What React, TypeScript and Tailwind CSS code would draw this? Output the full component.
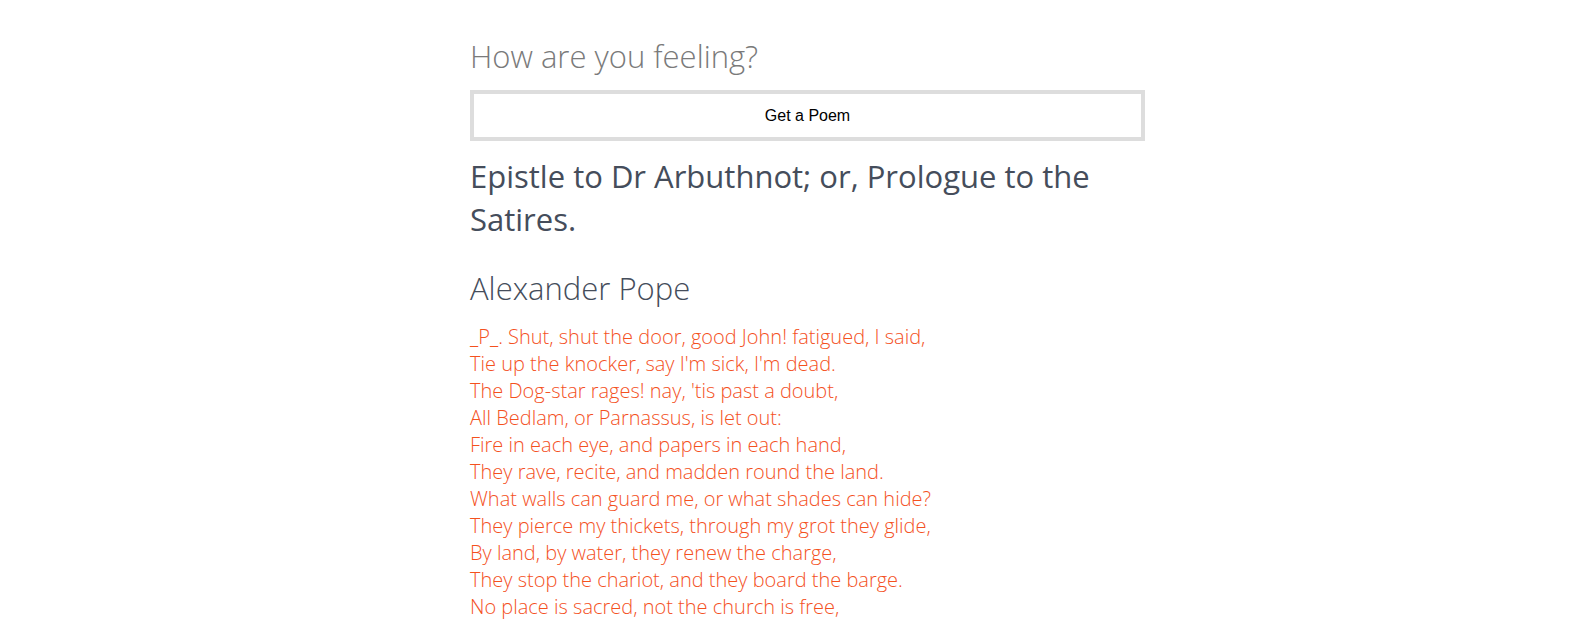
import React from 'react';

const lines = [
  "_P_. Shut, shut the door, good John! fatigued, I said,",
  "Tie up the knocker, say I'm sick, I'm dead.",
  "The Dog-star rages! nay, 'tis past a doubt,",
  'All Bedlam, or Parnassus, is let out:',
  'Fire in each eye, and papers in each hand,',
  'They rave, recite, and madden round the land.',
  'What walls can guard me, or what shades can hide?',
  'They pierce my thickets, through my grot they glide,',
  'By land, by water, they renew the charge,',
  'They stop the chariot, and they board the barge.',
  'No place is sacred, not the church is free,',
];

const App: React.FC = () => {
  return (
    <div className="min-h-screen bg-white font-['Open_Sans',sans-serif]">
      <div className="mx-auto w-[709px] pl-[34px] pt-[34px]">
        <input
          autoFocus
          placeholder="How are you feeling?"
          className="block w-full h-[44px] text-[31px] font-light text-[#333] placeholder:text-[#7a7a7a] outline-none bg-transparent"
        />
        <button className="mt-[12px] block w-full h-[51px] border-4 border-[#dddddd] bg-white font-['Liberation_Sans',sans-serif] text-[16px] text-black">
          Get a Poem
        </button>
        <h1 className="mt-[14px] text-[31px] leading-[43px] font-normal text-[#454d5b]">
          Epistle to Dr Arbuthnot; or, Prologue to the Satires.
        </h1>
        <h2 className="mt-[27px] text-[31px] leading-[40px] font-light text-[#454d5b]">Alexander Pope</h2>
        <div className="mt-[15px] text-[20px] leading-[27px] font-light text-[#f4511e]">
          {lines.map((l, i) => (
            <div key={i}>{l}</div>
          ))}
        </div>
      </div>
    </div>
  );
};

export default App;
